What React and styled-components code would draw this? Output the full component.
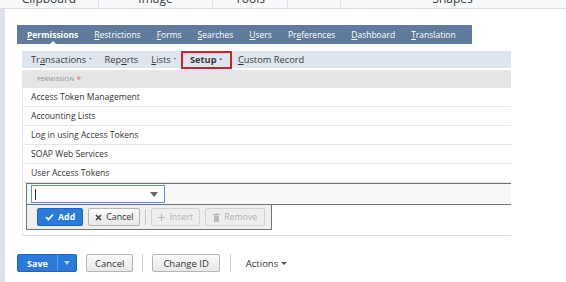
import React from 'react';
import styled, { createGlobalStyle } from 'styled-components';

const Global = createGlobalStyle`
  html, body { margin: 0; padding: 0; background: #fff; }
  body { font-family: "Open Sans", "DejaVu Sans", sans-serif; color: #333; }
`;

const Page = styled.div`
  width: 566px;
  height: 282px;
  overflow: hidden;
  display: flex;
  flex-direction: column;
`;

// cut-off ribbon of the program behind (only the bottom of the labels shows)
const Ribbon = styled.div`
  height: 8px;
  display: flex;
  background: #f7f8f9;
  border-bottom: 1px solid #dcdde0;
  overflow: hidden;
`;

const RibbonGroup = styled.div`
  width: ${p => p.w}px;
  height: 8px;
  border-right: ${p => (p.last ? 'none' : '1px solid #e2e3e6')};
  display: flex;
  justify-content: center;
  overflow: hidden;
`;

const RibbonLabel = styled.span`
  font-size: 12px;
  line-height: 16px;
  margin-top: -9px;
  color: #3b3b3b;
`;

const Body = styled.div`
  flex: 1;
  display: flex;
`;

const SideStrip = styled.div`
  width: 5px;
  background: #dde2ea;
`;

const Main = styled.div`
  flex: 1;
  padding: 16px 0 0 12px;
`;

const TabBar = styled.div`
  width: 455px;
  height: 19px;
  background: #607a9d;
  display: flex;
  align-items: center;
  padding-left: 10px;
  box-sizing: border-box;
  gap: 16px;
`;

const Tab = styled.span`
  position: relative;
  color: #fff;
  font-size: 8.5px;
  font-weight: ${p => (p.active ? 700 : 400)};
  u { text-decoration: underline; }
  &::after {
    content: '';
    display: ${p => (p.active ? 'block' : 'none')};
    position: absolute;
    left: 50%;
    bottom: -5px;
    margin-left: -4px;
    border-left: 4px solid transparent;
    border-right: 4px solid transparent;
    border-bottom: 4px solid #fff;
  }
`;

const SubPanel = styled.div`
  width: 489px;
  margin: 7px 0 0 5px;
`;

const SubTabs = styled.div`
  height: 17px;
  background: #dfe5ee;
  display: flex;
  align-items: center;
  padding-left: 3px;
`;

const SubTab = styled.span`
  font-size: 9.3px;
  color: #3a3a3a;
  height: 18px;
  line-height: 17px;
  box-sizing: border-box;
  margin-right: ${p => p.mr || 0}px;
  font-weight: ${p => (p.active ? 700 : 400)};
  outline: ${p => (p.active ? '2px solid #d21f2b' : 'none')};
  outline-offset: -2px;
  padding: ${p => (p.active ? '0 10px 0 9px' : '0 6px')};
`;

const Dot = styled.span`
  font-size: 6px;
  margin-left: 3px;
  vertical-align: 2px;
`;

const Machine = styled.div`
  margin-top: 2px;
  border-left: 1px solid #e6e6e6;
  border-bottom: 1px solid #e0e0e0;
  padding-bottom: 5px;
`;

const HeaderRow = styled.div`
  height: 18px;
  background: #e5e5e5;
  display: flex;
  align-items: center;
  padding-left: 14px;
  font-size: 6px;
  letter-spacing: 0.2px;
  color: #8b8b8b;
`;

const Req = styled.span`
  color: #e07070;
  font-size: 9px;
  margin-left: 2px;
`;

const Row = styled.div`
  height: 18px;
  border-bottom: 1px solid #e6e6e6;
  display: flex;
  align-items: center;
  padding-left: 8px;
  font-size: 8.6px;
  color: #333;
`;

const EditRow = styled.div`
  margin-left: 3px;
  height: 20px;
  border-top: 1px solid #6c747c;
  border-bottom: 1px solid #6c747c;
  border-left: 1px solid #6c747c;
  background: #f8f8f8;
  display: flex;
  align-items: center;
  padding-left: 4px;
`;

const SelectBox = styled.div`
  width: 134px;
  height: 18px;
  box-sizing: border-box;
  border: 1px solid #5a93cf;
  background: #fff;
  display: flex;
  align-items: center;
  justify-content: space-between;
  padding: 0 6px 0 3px;
`;

const Caret = styled.span`
  width: 1px;
  height: 11px;
  background: #333;
`;

const DownArrow = styled.span`
  border-left: 4px solid transparent;
  border-right: 4px solid transparent;
  border-top: 5px solid #666;
`;

const ButtonBar = styled.div`
  margin-left: 3px;
  width: 246px;
  box-sizing: border-box;
  height: 25px;
  background: #efefef;
  border: 1px solid #6c747c;
  border-top: none;
  display: flex;
  align-items: center;
  padding-left: 10px;
  gap: 5px;
`;

const Btn = styled.button`
  height: 18px;
  box-sizing: border-box;
  padding: 0 ${p => p.px || 7}px;
  font-family: "Open Sans", sans-serif;
  font-size: 8.8px;
  display: flex;
  align-items: center;
  gap: 4px;
  border-radius: 2px;
  cursor: pointer;
  font-weight: ${p => (p.primary ? 700 : 400)};
  color: ${p => (p.primary ? '#fff' : p.disabled ? '#b3b3b3' : '#333')};
  background: ${p => (p.primary ? '#2a7ade' : p.disabled ? '#eeeeee' : 'linear-gradient(#fafafa, #e8e8e8)')};
  border: 1px solid ${p => (p.primary ? '#1f66c1' : p.disabled ? '#d2d2d2' : '#b5b5b5')};
`;

const Sep = styled.span`
  width: 1px;
  height: ${p => p.h || 18}px;
  background: #c8c8c8;
  margin: 0 ${p => p.m || 0}px;
`;

const Footer = styled.div`
  margin-top: 18px;
  display: flex;
  align-items: center;
`;

const SaveGroup = styled.div`
  display: flex;
  height: 18px;
  border-radius: 2px;
  overflow: hidden;
  background: #2a7ade;
  border: 1px solid #1f66c1;
  box-sizing: border-box;
  margin-right: 9px;
`;

const SaveMain = styled.span`
  width: 39px;
  display: flex;
  align-items: center;
  justify-content: center;
  color: #fff;
  font-weight: 700;
  font-size: 9px;
  border-right: 1px solid #5c9ce8;
`;

const SaveArrow = styled.span`
  width: 18px;
  display: flex;
  align-items: center;
  justify-content: center;
  &::before {
    content: '';
    border-left: 3px solid transparent;
    border-right: 3px solid transparent;
    border-top: 4px solid #bcd6f6;
  }
`;

const FootBtn = styled(Btn)`
  font-size: 9.5px;
  padding: 0 ${p => p.px || 8}px;
`;

const ActionsLink = styled.span`
  font-size: 9.5px;
  color: #333;
  margin-left: 5px;
  display: flex;
  align-items: center;
  gap: 3px;
  &::after {
    content: '';
    border-left: 3px solid transparent;
    border-right: 3px solid transparent;
    border-top: 3px solid #555;
  }
`;

const Check = () => (
  <svg width="9" height="8" viewBox="0 0 9 8">
    <path d="M1 4.2 L3.4 6.5 L8 1.5" stroke="#fff" strokeWidth="1.8" fill="none" />
  </svg>
);

const Cross = () => (
  <svg width="7" height="7" viewBox="0 0 7 7">
    <path d="M1 1 L6 6 M6 1 L1 6" stroke="#444" strokeWidth="1.6" />
  </svg>
);

const Plus = () => (
  <svg width="7" height="7" viewBox="0 0 7 7">
    <path d="M3.5 0 V7 M0 3.5 H7" stroke="#bbb" strokeWidth="1.2" />
  </svg>
);

const Trash = () => (
  <svg width="7" height="9" viewBox="0 0 7 9">
    <rect x="0" y="1" width="7" height="1.2" fill="#bbb" />
    <rect x="2.5" y="0" width="2" height="1" fill="#bbb" />
    <rect x="1" y="2.6" width="5" height="6.4" fill="#bbb" />
  </svg>
);

const ribbon = [
  { w: 98, label: 'Clipboard' },
  { w: 113, label: 'Image' },
  { w: 74, label: 'Tools' },
  { w: 52, label: '' },
  { w: 223, label: 'Shapes' },
];

const permissions = [
  'Access Token Management',
  'Accounting Lists',
  'Log in using Access Tokens',
  'SOAP Web Services',
  'User Access Tokens',
];

export default function App() {
  return (
    <Page>
      <Global />
      <Ribbon>
        {ribbon.map((g, i) => (
          <RibbonGroup key={i} w={g.w} last={i === ribbon.length - 1}>
            <RibbonLabel>{g.label}</RibbonLabel>
          </RibbonGroup>
        ))}
      </Ribbon>
      <Body>
        <SideStrip />
        <Main>
          <TabBar>
            <Tab active><u>P</u>ermissions</Tab>
            <Tab><u>R</u>estrictions</Tab>
            <Tab><u>F</u>orms</Tab>
            <Tab><u>S</u>earches</Tab>
            <Tab><u>U</u>sers</Tab>
            <Tab>Pr<u>e</u>ferences</Tab>
            <Tab><u>D</u>ashboard</Tab>
            <Tab><u>T</u>ranslation</Tab>
          </TabBar>
          <SubPanel>
            <SubTabs>
              <SubTab mr={1}>Tr<u>a</u>nsactions<Dot>•</Dot></SubTab>
              <SubTab mr={1}>Rep<u>o</u>rts</SubTab>
              <SubTab mr={-1}><u>L</u>ists<Dot>•</Dot></SubTab>
              <SubTab active>Setup<Dot>•</Dot></SubTab>
              <SubTab><u>C</u>ustom Record</SubTab>
            </SubTabs>
            <Machine>
              <HeaderRow>PERMISSION<Req>*</Req></HeaderRow>
              {permissions.map(p => (
                <Row key={p}>{p}</Row>
              ))}
              <EditRow>
                <SelectBox>
                  <Caret />
                  <DownArrow />
                </SelectBox>
              </EditRow>
              <ButtonBar>
                <Btn primary px={7}><Check />Add</Btn>
                <Btn px={6}><Cross />Cancel</Btn>
                <Sep h={16} />
                <Btn disabled px={6}><Plus />Insert</Btn>
                <Btn disabled px={7}><Trash />Remove</Btn>
              </ButtonBar>
            </Machine>
          </SubPanel>
          <Footer>
            <SaveGroup>
              <SaveMain>Save</SaveMain>
              <SaveArrow />
            </SaveGroup>
            <FootBtn px={8}>Cancel</FootBtn>
            <Sep h={18} m={9} />
            <FootBtn px={10}>Change ID</FootBtn>
            <Sep h={18} m={10} />
            <ActionsLink>Actions</ActionsLink>
          </Footer>
        </Main>
      </Body>
    </Page>
  );
}
